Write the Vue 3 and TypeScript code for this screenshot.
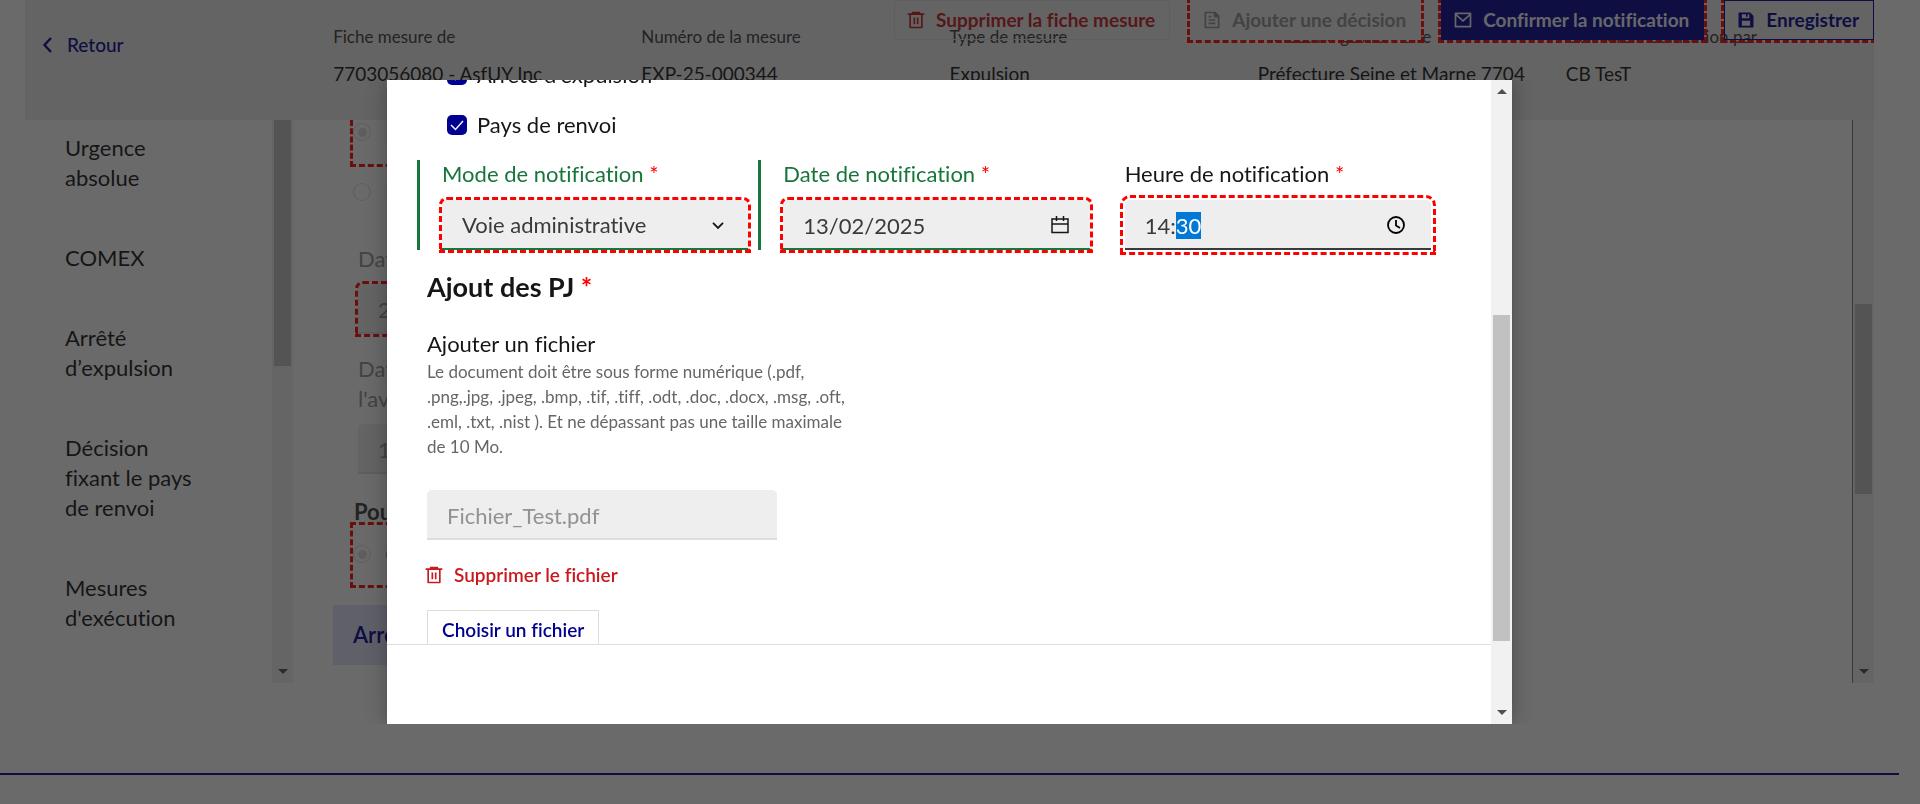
<script setup lang="ts">
import { onMounted, ref } from 'vue'

interface Info {
  label: string
  value: string
}

const infos: Info[] = [
  { label: 'Fiche mesure de', value: '7703056080 - AsfUY Inc' },
  { label: 'Numéro de la mesure', value: 'EXP-25-000344' },
  { label: 'Type de mesure', value: 'Expulsion' },
  { label: 'Préfecture gestionnaire', value: 'Préfecture Seine et Marne 7704' },
  { label: 'Dernière modification par', value: 'CB TesT' },
]

const sections: string[] = [
  'Urgence absolue',
  'COMEX',
  'Arrêté d’expulsion',
  'Décision fixant le pays de renvoi',
  "Mesures d'exécution",
]

const arrete = ref(true)
const pays = ref(true)
const mode = ref('Voie administrative')
const dateNotif = ref('13/02/2025')
const heureNotif = ref('14:30')
const fichier = ref('Fichier_Test.pdf')
const heureInput = ref<HTMLInputElement | null>(null)

onMounted(() => {
  heureInput.value?.focus({ preventScroll: true })
  heureInput.value?.setSelectionRange(3, 5)
})
</script>

<template>
  <div class="page">
    <header class="head">
      <a class="back" href="#">
        <svg width="20" height="20" viewBox="0 0 20 20" aria-hidden="true">
          <path d="M14 3 7.500 10l6.500 7" fill="none" stroke="currentColor" stroke-width="2.400" />
        </svg>
        Retour
      </a>
      <dl v-for="info in infos" :key="info.label" class="info">
        <dt>{{ info.label }}</dt>
        <dd>{{ info.value }}</dd>
      </dl>
      <div class="toolbar">
        <button type="button" class="btn danger">
          <svg width="20" height="20" viewBox="0 0 24 24" fill="currentColor" aria-hidden="true">
            <path d="M17 4h5v2h-2v15a1 1 0 0 1-1 1H5a1 1 0 0 1-1-1V6H2V4h5V2h10v2Zm1 2H6v14h12V6Zm-9 3h2v8H9V9Zm4 0h2v8h-2V9Z" />
          </svg>
          Supprimer la fiche mesure
        </button>
        <button type="button" class="btn muted marked" disabled>
          <svg width="20" height="20" viewBox="0 0 24 24" fill="currentColor" aria-hidden="true">
            <path d="M20 22H4a1 1 0 0 1-1-1V3a1 1 0 0 1 1-1h12l5 5v14a1 1 0 0 1-1 1Zm-1-2V9h-5V4H5v16h14ZM8 7h3v2H8V7Zm0 4h8v2H8v-2Zm0 4h8v2H8v-2Z" />
          </svg>
          Ajouter une décision
        </button>
        <button type="button" class="btn primary marked">
          <svg width="20" height="20" viewBox="0 0 24 24" fill="currentColor" aria-hidden="true">
            <path d="M3 3h18a1 1 0 0 1 1 1v16a1 1 0 0 1-1 1H3a1 1 0 0 1-1-1V4a1 1 0 0 1 1-1Zm17 4.2-8 7.2-8-7.2V19h16V7.200ZM4.500 5l7.500 6.700L19.500 5h-15Z" />
          </svg>
          Confirmer la notification
        </button>
        <button type="button" class="btn outlined marked">
          <svg width="20" height="20" viewBox="0 0 24 24" fill="currentColor" aria-hidden="true">
            <path d="M4 3h13l4 4v13a1 1 0 0 1-1 1H4a1 1 0 0 1-1-1V4a1 1 0 0 1 1-1Zm3 16h10v-6H7v6Zm0-14v5h9V5h-2v3h-2V5H7Z" />
          </svg>
          Enregistrer
        </button>
      </div>
    </header>

    <div class="columns">
      <div class="side">
        <nav class="menu" aria-label="Sections">
          <a v-for="s in sections" :key="s" href="#">{{ s }}</a>
        </nav>
        <div class="track" aria-hidden="true">
          <span class="thumb side-thumb"></span>
          <span class="down"></span>
        </div>
      </div>

      <main class="main">
        <form class="sheet">
          <div class="choices first">
            <label class="radio"><input type="radio" name="avis" checked disabled />Favorable</label>
          </div>
          <label class="radio alone"><input type="radio" name="avis" disabled />Défavorable</label>
          <label class="field first-field">
            <span>Date</span>
            <input type="text" value="2" disabled class="marked" />
          </label>
          <label class="field second-field">
            <span>Date de<br />l'avis</span>
            <input type="text" value="1" disabled />
          </label>
          <h3>Pour</h3>
          <div class="choices">
            <label class="radio"><input type="radio" name="pour" checked disabled />Oui</label>
          </div>
          <button type="button" class="accordion">Arrêté</button>
        </form>
        <div class="track main-track" aria-hidden="true">
          <span class="thumb main-thumb"></span>
          <span class="down"></span>
        </div>
      </main>
    </div>
    <footer class="foot"></footer>
  </div>

  <div class="overlay">
    <section class="modal" role="dialog" aria-modal="true" aria-label="Notification">
      <div class="modal-main">
        <div class="modal-body">
          <div class="checks">
            <label class="check"><input v-model="arrete" type="checkbox" />Arrêté d'expulsion</label>
            <label class="check"><input v-model="pays" type="checkbox" />Pays de renvoi</label>
          </div>
          <div class="fields">
            <div class="group valid">
              <label for="mode">Mode de notification <em>*</em></label>
              <div class="control">
                <select id="mode" v-model="mode" class="marked">
                  <option>Voie administrative</option>
                </select>
                <svg width="20" height="20" viewBox="0 0 24 24" aria-hidden="true">
                  <path d="m6 9.500 6 6 6-6" fill="none" stroke="#161616" stroke-width="2.200" />
                </svg>
              </div>
            </div>
            <div class="group valid">
              <label for="date">Date de notification <em>*</em></label>
              <div class="control">
                <input id="date" v-model="dateNotif" type="text" class="marked" />
                <svg width="20" height="20" viewBox="0 0 20 20" fill="none" stroke="#161616" stroke-width="1.500" aria-hidden="true">
                  <path d="M2 4h16v13.500H2zM2 9h16M6.500 1v5M13.500 1v5" />
                </svg>
              </div>
            </div>
            <div class="group">
              <label for="heure">Heure de notification <em>*</em></label>
              <div class="control time">
                <input id="heure" ref="heureInput" v-model="heureNotif" type="text" class="marked focused" />
                <svg width="20" height="20" viewBox="0 0 20 20" fill="none" stroke="#000" stroke-width="1.800" aria-hidden="true">
                  <circle cx="10" cy="10" r="8" />
                  <path d="M10 5v5.500l4 2.500" />
                </svg>
              </div>
            </div>
          </div>
          <h2>Ajout des PJ <em>*</em></h2>
          <label class="file-label" for="fichier">
            Ajouter un fichier
            <span>Le document doit être sous forme numérique (.pdf, .png,.jpg, .jpeg, .bmp, .tif, .tiff, .odt, .doc, .docx, .msg, .oft, .eml, .txt, .nist ). Et ne dépassant pas une taille maximale de 10 Mo.</span>
          </label>
          <input id="fichier" v-model="fichier" class="file" type="text" disabled />
          <button type="button" class="remove">
            <svg width="20" height="20" viewBox="0 0 24 24" fill="currentColor" aria-hidden="true">
              <path d="M17 4h5v2h-2v15a1 1 0 0 1-1 1H5a1 1 0 0 1-1-1V6H2V4h5V2h10v2Zm1 2H6v14h12V6Zm-9 3h2v8H9V9Zm4 0h2v8h-2V9Z" />
            </svg>
            Supprimer le fichier
          </button>
          <button type="button" class="choose">Choisir un fichier</button>
        </div>
        <div class="modal-foot"></div>
      </div>
      <div class="track" aria-hidden="true">
        <span class="up"></span>
        <span class="thumb modal-thumb"></span>
        <span class="down"></span>
      </div>
    </section>
  </div>
</template>

<style>
body {
  margin: 0;
  overflow: hidden;
}
</style>

<style scoped>
* {
  box-sizing: border-box;
}

.page,
.overlay,
button,
input,
select {
  font-family: Lato, "Noto Sans", sans-serif;
  font-size: 22px;
  line-height: 30px;
  font-variant-ligatures: none;
  color: #161616;
}

.page {
  height: 100vh;
  padding: 0 21px 0 0;
  background: #fff;
  overflow: hidden;
}

a {
  color: inherit;
  text-decoration: none;
}

em {
  color: #f00;
  font-style: normal;
}

/* header */
.head {
  position: relative;
  display: grid;
  grid-template-columns: repeat(6, 1fr);
  height: 120px;
  margin: 0 25px;
  background: #eee;
  overflow: hidden;
}

.back {
  display: flex;
  align-items: center;
  gap: 10px;
  height: 30px;
  margin: 30px 0 0 12px;
  font-size: 19px;
  font-weight: 500;
  color: #000091;
}

.info {
  margin: 24px 0 0;
  white-space: nowrap;
  color: #3a3a3a;
}

.info dt {
  font-size: 17px;
  line-height: 25px;
}

.info dd {
  margin: 10px 0 0;
  font-size: 19px;
  color: #161616;
}

.toolbar {
  position: absolute;
  top: 0;
  right: 0;
  display: flex;
  gap: 20px;
}

.btn {
  display: flex;
  align-items: center;
  gap: 10px;
  height: 40px;
  padding: 0 14px 0 11px;
  border: 1px solid transparent;
  background: none;
  font-size: 19px;
  font-weight: 700;
  white-space: nowrap;
}

.btn.danger {
  border-color: #ddd;
  color: #c9191e;
}

.btn.muted {
  background: #eee;
  color: #929292;
}

.btn.primary {
  background: #000091;
  color: #f5f5fe;
}

.btn.outlined {
  border-color: #000091;
  color: #000091;
}

.marked {
  outline: 3px dashed #f00;
}

/* page body */
.columns {
  display: flex;
  gap: 40px;
  height: calc(100vh - 241px);
  margin: 0 25px;
}

.side {
  display: flex;
  justify-content: space-between;
  width: 268px;
  overflow: hidden;
}

.menu {
  display: flex;
  flex-direction: column;
  gap: 50px;
  width: 180px;
  padding: 13px 0 0 40px;
}

.track {
  position: relative;
  flex: none;
  width: 21px;
  background: #f1f1f1;
}

.thumb {
  position: absolute;
  left: 2px;
  right: 2px;
  background: #c1c1c1;
}

.side-thumb {
  top: 0;
  height: 246px;
}

.main-thumb {
  top: 184px;
  height: 190px;
}

.modal-thumb {
  top: 235px;
  height: 326px;
}

.down,
.up {
  position: absolute;
  left: 6px;
  border: 5px solid transparent;
  border-bottom-width: 0;
  border-top-color: #505050;
}

.down {
  bottom: 9px;
}

.up {
  top: 9px;
  border-width: 0 5px 5px;
  border-bottom-color: #505050;
}

.main {
  display: flex;
  flex: 1;
  overflow: hidden;
}

.sheet {
  display: flex;
  flex: 1;
  flex-direction: column;
  color: #929292;
}

.main-track {
  width: 22px;
  border-left: 1px solid #777;
}

.choices {
  width: 300px;
  height: 66px;
  margin-left: 17px;
  padding-top: 14px;
  border: 3px dashed #f00;
}

.choices.first {
  height: 47px;
  padding-top: 0;
  border-top: 0;
}

.radio {
  display: flex;
  align-items: center;
  gap: 14px;
}

.choices.first .radio {
  height: 24px;
}

.radio.alone {
  height: 30px;
  margin: 10px 0 0 20px;
}

.radio input {
  display: grid;
  place-content: center;
  width: 18px;
  height: 18px;
  margin: 0;
  border: 1px solid #ddd;
  border-radius: 50%;
  appearance: none;
}

.radio input:checked::before {
  content: "";
  width: 9px;
  height: 9px;
  border-radius: 50%;
  background: #ddd;
}

.field {
  display: flex;
  flex-direction: column;
  gap: 10px;
  width: 300px;
  margin-left: 25px;
}

.first-field {
  margin-top: 37px;
}

.second-field {
  margin-top: 20px;
}

.field input,
.control input,
.control select,
.file {
  width: 100%;
  height: 50px;
  padding: 0 20px;
  border: 0;
  border-radius: 5px 5px 0 0;
  background: #eee;
  box-shadow: inset 0 -2px #3a3a3a;
  color: #3a3a3a;
  appearance: none;
}

.field input,
.file {
  box-shadow: inset 0 -2px #ddd;
  color: #929292;
}

h3 {
  margin: 28px 0 0 21px;
  font-size: 22px;
  line-height: 20px;
  font-weight: 700;
  color: #3a3a3a;
}

.accordion {
  max-width: 1100px;
  height: 60px;
  margin: 17px 0 0;
  padding: 0 20px;
  border: 0;
  background: #e3e3fd;
  color: #000091;
  font-weight: 600;
  text-align: left;
}

.foot {
  height: 40px;
  margin-top: 90px;
  border-top: 2px solid #000091;
}

/* modal */
.overlay {
  position: fixed;
  inset: 0;
  display: flex;
  justify-content: center;
  padding: 80px 21px 80px 0;
  background: rgba(22, 22, 22, 0.64);
}

.modal {
  display: flex;
  width: 100%;
  max-width: 1125px;
  background: #fff;
  box-shadow: 0 0 20px rgba(0, 0, 18, 0.32);
  clip-path: inset(0 -40px);
}

.modal-main {
  display: flex;
  flex: 1;
  flex-direction: column;
}

.modal-body {
  flex: 1;
  min-height: 0;
  padding: 0 60px 0 40px;
  overflow: hidden;
}

.modal-foot {
  flex: none;
  height: 80px;
  border-top: 1px solid #ddd;
}

.checks {
  display: flex;
  flex-direction: column;
  gap: 20px;
  margin: -20px 0 20px 20px;
}

.check {
  display: flex;
  align-items: center;
  gap: 10px;
}

.check input {
  width: 20px;
  height: 20px;
  margin: 0;
  border-radius: 5px;
  background: #000091 url("data:image/svg+xml,%3Csvg xmlns='http://www.w3.org/2000/svg' viewBox='0 0 20 20'%3E%3Cpath d='m4 10 4.500 4.500L16 6' fill='none' stroke='%23f5f5fe' stroke-width='1.500'/%3E%3C/svg%3E");
  appearance: none;
}

.fields {
  display: grid;
  grid-template-columns: repeat(3, 1fr);
  gap: 35px;
  margin-left: 15px;
}

.group {
  position: relative;
  display: flex;
  flex-direction: column;
  gap: 12px;
}

.group label {
  line-height: 28px;
}

.group.valid label {
  color: #18753c;
}

.group.valid::before {
  content: "";
  position: absolute;
  inset: 0 auto 0 -25px;
  width: 3px;
  background: #18753c;
}

.control {
  position: relative;
}

.control svg {
  position: absolute;
  top: 15px;
  right: 20px;
  pointer-events: none;
}

.control.time svg {
  right: 25px;
}

.valid .control input,
.valid .control select {
  box-shadow: inset 0 -2px #18753c;
}

.control .focused {
  outline-offset: 2px;
}

.control input::selection {
  background: #0078d7;
  color: #fff;
}

h2 {
  margin: 19px 0 25px;
  font-size: 27px;
  line-height: 35px;
  font-weight: 700;
}

.file-label {
  display: block;
  width: 425px;
}

.file-label span {
  display: block;
  font-size: 17px;
  line-height: 25px;
  color: #666;
}

.file {
  display: block;
  width: 350px;
  margin-top: 31px;
}

.remove,
.choose {
  display: flex;
  align-items: center;
  height: 40px;
  border: 0;
  background: none;
  font-size: 19px;
  font-weight: 600;
}

.remove {
  gap: 10px;
  margin: 15px 0 15px -3px;
  padding: 0;
  color: #c9191e;
}

.choose {
  padding: 0 14px;
  border: 1px solid #ddd;
  color: #000091;
}
</style>
